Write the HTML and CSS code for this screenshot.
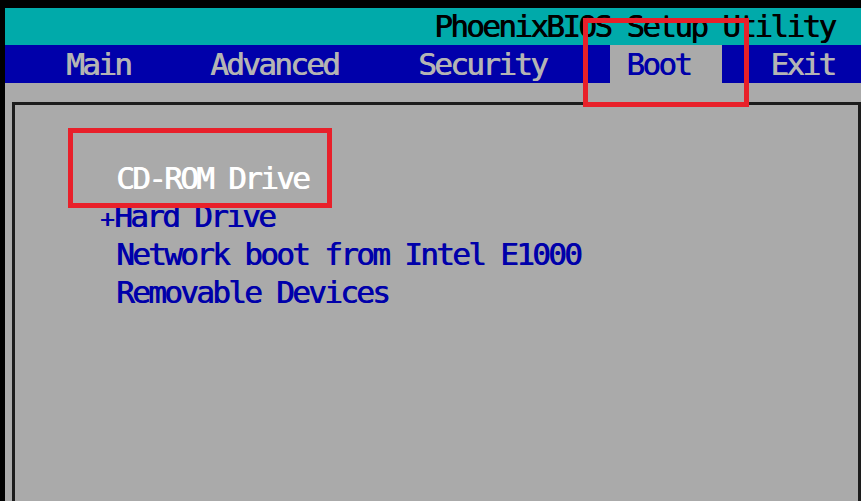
FILE: index.html
```html
<!doctype html>
<html lang="en">
<head>
    <meta charset="utf-8">
    <title>PhoenixBIOS Setup Utility - Boot</title>
    <link rel="stylesheet" href="styles.css">
</head>
<body>
<div class="screen">

    <!--  title line  -->
    <div class="row title">                           PhoenixBIOS Setup Utility</div>
    <!--  menu line  -->
    <div class="row menu">    Main     Advanced     Security    <span class="active"> Boot  </span>   Exit</div>

    <!--  boot order  -->
    <div class="panel">
        <div class="row item current"> CD-ROM Drive</div>
        <div class="row item"><span class="plus">+</span>Hard Drive</div>
        <div class="row item"> Network boot from Intel E1000</div>
        <div class="row item"> Removable Devices</div>
    </div>
</div>

<!--  red marks drawn over the screenshot  -->
<div class="mark markBoot"></div>
<div class="mark markCd"></div>
</body>
</html>
```

FILE: styles.css
```css
* {
    margin: 0;
    padding: 0;
}

html, body {
    background: #000;
    width: 861px;
    height: 501px;
    overflow: hidden;
}

body {
    position: relative;
    font-family: "DejaVu Sans Mono", "Liberation Mono", monospace;
    font-size: 31px;
    letter-spacing: -2.66px;
}

.screen {
    margin: 8px 0 0 5px;
    background: #aaaaaa;
    height: 493px;
}

.row {
    white-space: pre;
    height: 38px;
    line-height: 38px;
    /* vga glyphs are a bit heavier than the regular face */
    text-shadow: 0.7px 0 0 currentColor;
}

.title {
    height: 37px;
    line-height: 37px;
    background: #00aaaa;
    color: #000;
    text-indent: -3px;
}

.menu {
    background: #0000aa;
    color: #b4b4b4;
    text-indent: -3px;
}

.menu .active {
    display: inline-block;
    height: 38px;
    vertical-align: top;
    background: #aaaaaa;
    color: #0000aa;
    text-indent: 0;
}

.panel {
    margin-top: 19px;
    height: 342px;
    border: 3px solid #1c1c1c;
    border-bottom: none;
    margin-left: 7px;
    padding: 54px 0 0 85px;
}

.item {
    color: #0000aa;
}

.item.current {
    color: #fff;
}

.item .plus {
    font-size: 24px;
    letter-spacing: -0.5px;
}

.mark {
    position: absolute;
    border: 5px solid #e8202a;
}

.markBoot {
    left: 583px;
    top: 18px;
    width: 156px;
    height: 79px;
}

.markCd {
    left: 68px;
    top: 128px;
    width: 254px;
    height: 70px;
}
```
